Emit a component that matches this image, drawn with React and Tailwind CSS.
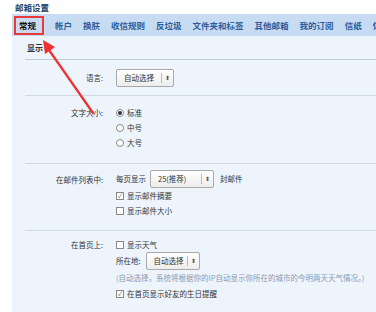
import React from "react";

const tabs = ["帐户", "换肤", "收信规则", "反垃圾", "文件夹和标签", "其他邮箱", "我的订阅", "信纸", "体"];

function Select({ text, width }) {
  return (
    <div
      className={`flex items-center h-[18px] border border-[#a9a9a9] rounded-[2px] bg-gradient-to-b from-white to-[#ededed] ${width}`}
    >
      <span className="flex-1 pl-[7px] text-[7.5px] text-[#333]">{text}</span>
      <span className="w-px h-[10px] bg-[#bbb]" />
      <span className="w-[11px] text-center text-[6px] text-[#555] leading-none">⬍</span>
    </div>
  );
}

function Radio({ checked, label }) {
  return (
    <div className="flex items-center h-[15px] gap-[3px]">
      <span className="w-[8px] h-[8px] rounded-full border border-[#888] bg-white flex items-center justify-center">
        {checked && <span className="w-[4px] h-[4px] rounded-full bg-[#333]" />}
      </span>
      <span>{label}</span>
    </div>
  );
}

function Check({ checked, label }) {
  return (
    <div className="flex items-center h-[15px] gap-[3px]">
      <span className="w-[8px] h-[8px] border border-[#888] bg-white flex items-center justify-center text-[6px] leading-none text-[#555]">
        {checked && "✓"}
      </span>
      <span>{label}</span>
    </div>
  );
}

function Row({ label, children, className }) {
  return (
    <div className={`flex ml-[13px] border-b border-[#cfd9e5] ${className}`}>
      <div className="w-[80px] text-right pr-[2px] h-[15px] leading-[15px] shrink-0">{label}</div>
      <div className="ml-[11px] flex flex-col">{children}</div>
    </div>
  );
}

export default function App() {
  return (
    <div
      className="relative w-[376px] h-[312px] overflow-hidden bg-white text-[7.5px] text-[#333]"
      style={{ fontFamily: '"Noto Sans CJK SC", "Noto Sans", sans-serif' }}
    >
      <div className="h-[14px] pl-[15px] pt-[1px] text-[8.5px] font-bold text-[#24456f] leading-[12px]">邮箱设置</div>
      <div className="ml-[12px] bg-[#eef4fc] h-[298px]">
        <div className="h-[22px] bg-[#c7dbf2] flex items-center gap-[11px] text-[8.5px] font-bold text-[#2d5d9c] whitespace-nowrap overflow-hidden">
          <div className="ml-[2px] h-[19px] flex items-center border-2 border-[#e83a3a] pl-[3px] pr-[6px] text-[#111]">常规</div>
          {tabs.map((t) => (
            <span key={t}>{t}</span>
          ))}
        </div>
        <div className="ml-[13px] h-[24px] pl-[2px] flex items-center border-b border-[#bccbdc] text-[8px] font-bold text-[#333]">
          显示
        </div>
        <Row label="语言:" className="h-[36px] items-center">
          <Select text="自动选择" width="w-[58px]" />
        </Row>
        <Row label="文字大小:" className="h-[68px] pt-[9px]">
          <Radio checked label="标准" />
          <Radio label="中号" />
          <Radio label="大号" />
        </Row>
        <Row label="在邮件列表中:" className="h-[67px] pt-[6px] [&>div:first-child]:mt-[2px]">
          <div className="flex items-center gap-[4px] h-[18px]">
            <span>每页显示</span>
            <Select text="25(推荐)" width="w-[64px]" />
            <span className="ml-[2px]">封邮件</span>
          </div>
          <Check checked label="显示邮件摘要" />
          <Check label="显示邮件大小" />
        </Row>
        <div className="flex ml-[13px] pt-[6px]">
          <div className="w-[80px] text-right pr-[2px] h-[15px] leading-[15px] shrink-0">在首页上:</div>
          <div className="ml-[11px] flex flex-col">
            <Check label="显示天气" />
            <div className="flex items-center gap-[5px] h-[18px]">
              <span>所在地:</span>
              <Select text="自动选择" width="w-[54px]" />
            </div>
            <div className="h-[16px] leading-[16px] text-[#8a9bb3] whitespace-nowrap">
              (自动选择，系统将根据你的IP自动显示你所在的城市的今明两天天气情况。)
            </div>
            <Check checked label="在首页显示好友的生日提醒" />
          </div>
        </div>
      </div>
      <svg className="absolute left-0 top-0 pointer-events-none" width="376" height="312">
        <line x1="93" y1="113" x2="49" y2="50" stroke="#f03030" strokeWidth="2.2" strokeLinecap="round" />
        <polygon points="43,40 55,47 45,54" fill="#f03030" />
      </svg>
    </div>
  );
}
